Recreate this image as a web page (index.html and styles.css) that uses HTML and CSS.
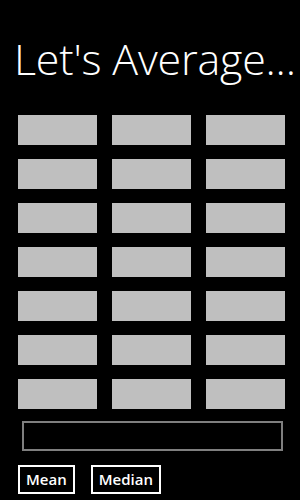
FILE: index.html
```html
<!DOCTYPE html>
<html lang="en">
<head>
  <meta charset="UTF-8">
  <meta name="viewport" content="width=device-width, initial-scale=1.0">
  <title>Let's Average</title>
  <link rel="stylesheet" href="styles.css">
</head>
<body>
  <header class="title">Let's Average...</header>
  <main>
    <div class="grid">
      <div class="cell"></div><div class="cell"></div><div class="cell"></div>
      <div class="cell"></div><div class="cell"></div><div class="cell"></div>
      <div class="cell"></div><div class="cell"></div><div class="cell"></div>
      <div class="cell"></div><div class="cell"></div><div class="cell"></div>
      <div class="cell"></div><div class="cell"></div><div class="cell"></div>
      <div class="cell"></div><div class="cell"></div><div class="cell"></div>
      <div class="cell"></div><div class="cell"></div><div class="cell"></div>
    </div>
    <div class="result"></div>
    <div class="buttons">
      <div class="btn">Mean</div>
      <div class="btn">Median</div>
    </div>
  </main>
</body>
</html>
```

FILE: styles.css
```css
body,
header,
main,
div {
  margin: 0;
  border: 0;
  padding: 0;
}

body {
  width: 300px;
  height: 500px;
  overflow: hidden;
  background: #000;
  color: #fff;
  font-family: "Open Sans", "Noto Sans", sans-serif;
}
.title{
  padding: 30px 0 0 14px;
  height: 85px;
  box-sizing: border-box;
  font-size: 43px;
  font-weight: 300;
  line-height: 58px;
  letter-spacing: -0.2px;
  white-space: nowrap;
}
main{
  padding: 30px 16px 0 18px;
}
.grid{
  display: grid;
  grid-template-columns: repeat(3, 79px);
  grid-auto-rows: 30px;
  column-gap: 15px;
  row-gap: 14px;
}
.cell{
  background: #bfbfbf;
}
.result{
  margin: 12px 1px 0 4px;
  height: 30px;
  box-sizing: border-box;
  border: 2px solid #7f7f7f;
}
.buttons{
  display: flex;
  gap: 16px;
  margin-top: 14px;
}
.btn{
  height: 29px;
  box-sizing: border-box;
  border: 2px solid #fff;
  padding: 0 6px;
  font-size: 15px;
  font-weight: 600;
  line-height: 25px;
}
```
